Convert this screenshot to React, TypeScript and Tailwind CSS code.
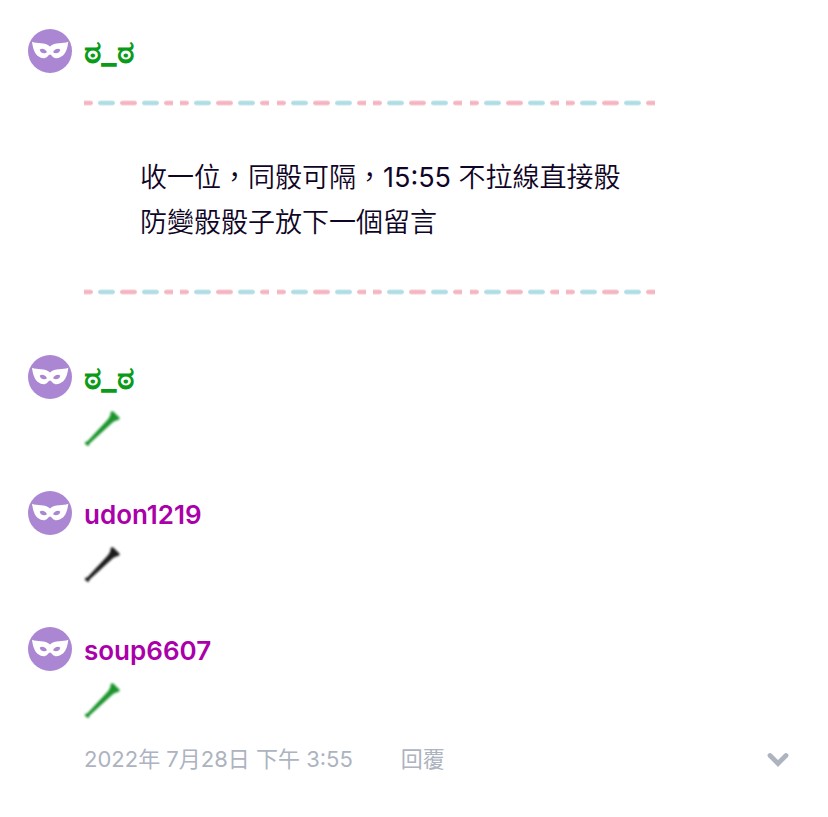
import { useId, type ReactNode } from 'react';

function MaskAvatar() {
  return (
    <svg viewBox="0 0 44 44" className="size-11 shrink-0" aria-hidden="true">
      <circle cx="22" cy="22" r="22" fill="#ab87d3" />
      <path
        fill="#fff"
        fillRule="evenodd"
        d="M4 12.8C9 15.3 17 12.5 22 17.6C27 12.5 35 15.3 40.3 12.8C39.8 16 39.3 19.5 37.8 22.6C35.8 27 31.5 29.6 27.5 29.2C24.5 28.9 23.5 25.6 22 25.6C20.5 25.6 19.5 28.9 16.5 29.2C12.5 29.6 8.4 27 6.5 22.6C5.1 19.5 4.5 16 4 12.8ZM11.7 20.8C13.5 18.8 18 20.2 18.9 23.2C17 25.3 12.4 24.6 11.7 20.8ZM32.3 20.8C30.5 18.8 26 20.2 25.1 23.2C27 25.3 31.6 24.6 32.3 20.8Z"
      />
    </svg>
  );
}

function Horn({ color }: { color: string }) {
  const id = useId();
  return (
    <svg viewBox="0 0 36 36" className="block size-9 overflow-visible" role="img" aria-label="horn">
      <defs>
        <filter id={id} x="-20%" y="-20%" width="140%" height="140%">
          <feGaussianBlur stdDeviation="0.8" />
        </filter>
      </defs>
      <path
        fill={color}
        stroke={color}
        strokeWidth="0.4"
        strokeLinejoin="round"
        filter={`url(#${id})`}
        d="M27 0.8L29 0.4L35.4 6.8L35 8.6C32 9.2 29 10.6 26.4 13.2L5.4 32.6L4.8 34.4L3.2 34.6L1 32.4L1.4 31L3.4 30.6L22.8 9.8C25.6 7 26.8 4.2 27 0.8Z"
      />
    </svg>
  );
}

function DashTile() {
  return (
    <svg viewBox="0 0 89 8" className="h-2 w-[89px] shrink-0" aria-hidden="true">
      <g strokeWidth="6" strokeLinecap="round" opacity="0.35">
        <path stroke="#f4b5c0" d="M-3 4H6M39 4H50M83 4H92" />
        <path stroke="#afdde3" d="M17 4H28M61 4H72" />
      </g>
      <g strokeWidth="3.6" strokeLinecap="round">
        <path stroke="#f4b5c0" d="M-3 4H7M38 4H51M82 4H92" />
        <path stroke="#afdde3" d="M16 4H29M60 4H73" />
      </g>
    </svg>
  );
}

function Divider() {
  return (
    <div className="flex max-w-[571px] justify-between overflow-hidden">
      {[0, 1, 2, 3, 4, 5].map((i) => (
        <DashTile key={i} />
      ))}
    </div>
  );
}

interface CommentProps {
  name: string;
  nameClass: string;
  children: ReactNode;
}

function Comment({ name, nameClass, children }: CommentProps) {
  return (
    <article>
      <header className="flex h-11 items-center gap-3">
        <MaskAvatar />
        <a href="#" className={`leading-10 ${nameClass}`}>
          {name}
        </a>
      </header>
      <div className="pl-14">{children}</div>
    </article>
  );
}

export default function App() {
  return (
    <main className="min-h-screen bg-white px-7 pt-[29px] pb-10 font-['Inter','Noto_Sans_CJK_TC',sans-serif]">
      <Comment name="ಠ_ಠ" nameClass="text-[33px] font-bold text-[#0a9c18]">
        <div className="pt-[26px] pb-[59px]">
          <Divider />
          <p className="pt-12 pr-10 pb-[43px] pl-14 text-[27px] leading-[45px] font-[350] text-[#0f0526]">
            收一位&#xFF0C;同骰可隔&#xFF0C;<span className="font-[400]">15:55</span> 不拉線直接骰
            <br />
            防變骰骰子放下一個留言
          </p>
          <Divider />
        </div>
      </Comment>

      <Comment name="ಠ_ಠ" nameClass="text-[33px] font-bold text-[#0a9c18]">
        <div className="pt-3 pb-11">
          <Horn color="#1e942d" />
        </div>
      </Comment>

      <Comment name="udon1219" nameClass="pt-1 text-[26px] font-semibold text-[#aa00aa]">
        <div className="pt-3 pb-11">
          <Horn color="#1c1c1c" />
        </div>
      </Comment>

      <Comment name="soup6607" nameClass="pt-1 text-[26px] font-semibold text-[#aa00aa]">
        <div className="pt-3">
          <Horn color="#1e942d" />
        </div>
      </Comment>

      <footer className="mt-6 flex items-center pr-2 pl-14 text-[22px] leading-8 text-[#adb3bf]">
        <time dateTime="2022-07-28T15:55">2022年 7月28日 下午 3:55</time>
        <button type="button" className="ml-12">
          回覆
        </button>
        <button type="button" aria-label="展開" className="ml-auto">
          <svg viewBox="0 0 28 28" className="block size-7" aria-hidden="true">
            <path
              d="M6 10.5L14 18.5L22 10.5"
              fill="none"
              stroke="#adb3bf"
              strokeWidth="4.8"
              strokeLinecap="round"
              strokeLinejoin="miter"
            />
          </svg>
        </button>
      </footer>
    </main>
  );
}
